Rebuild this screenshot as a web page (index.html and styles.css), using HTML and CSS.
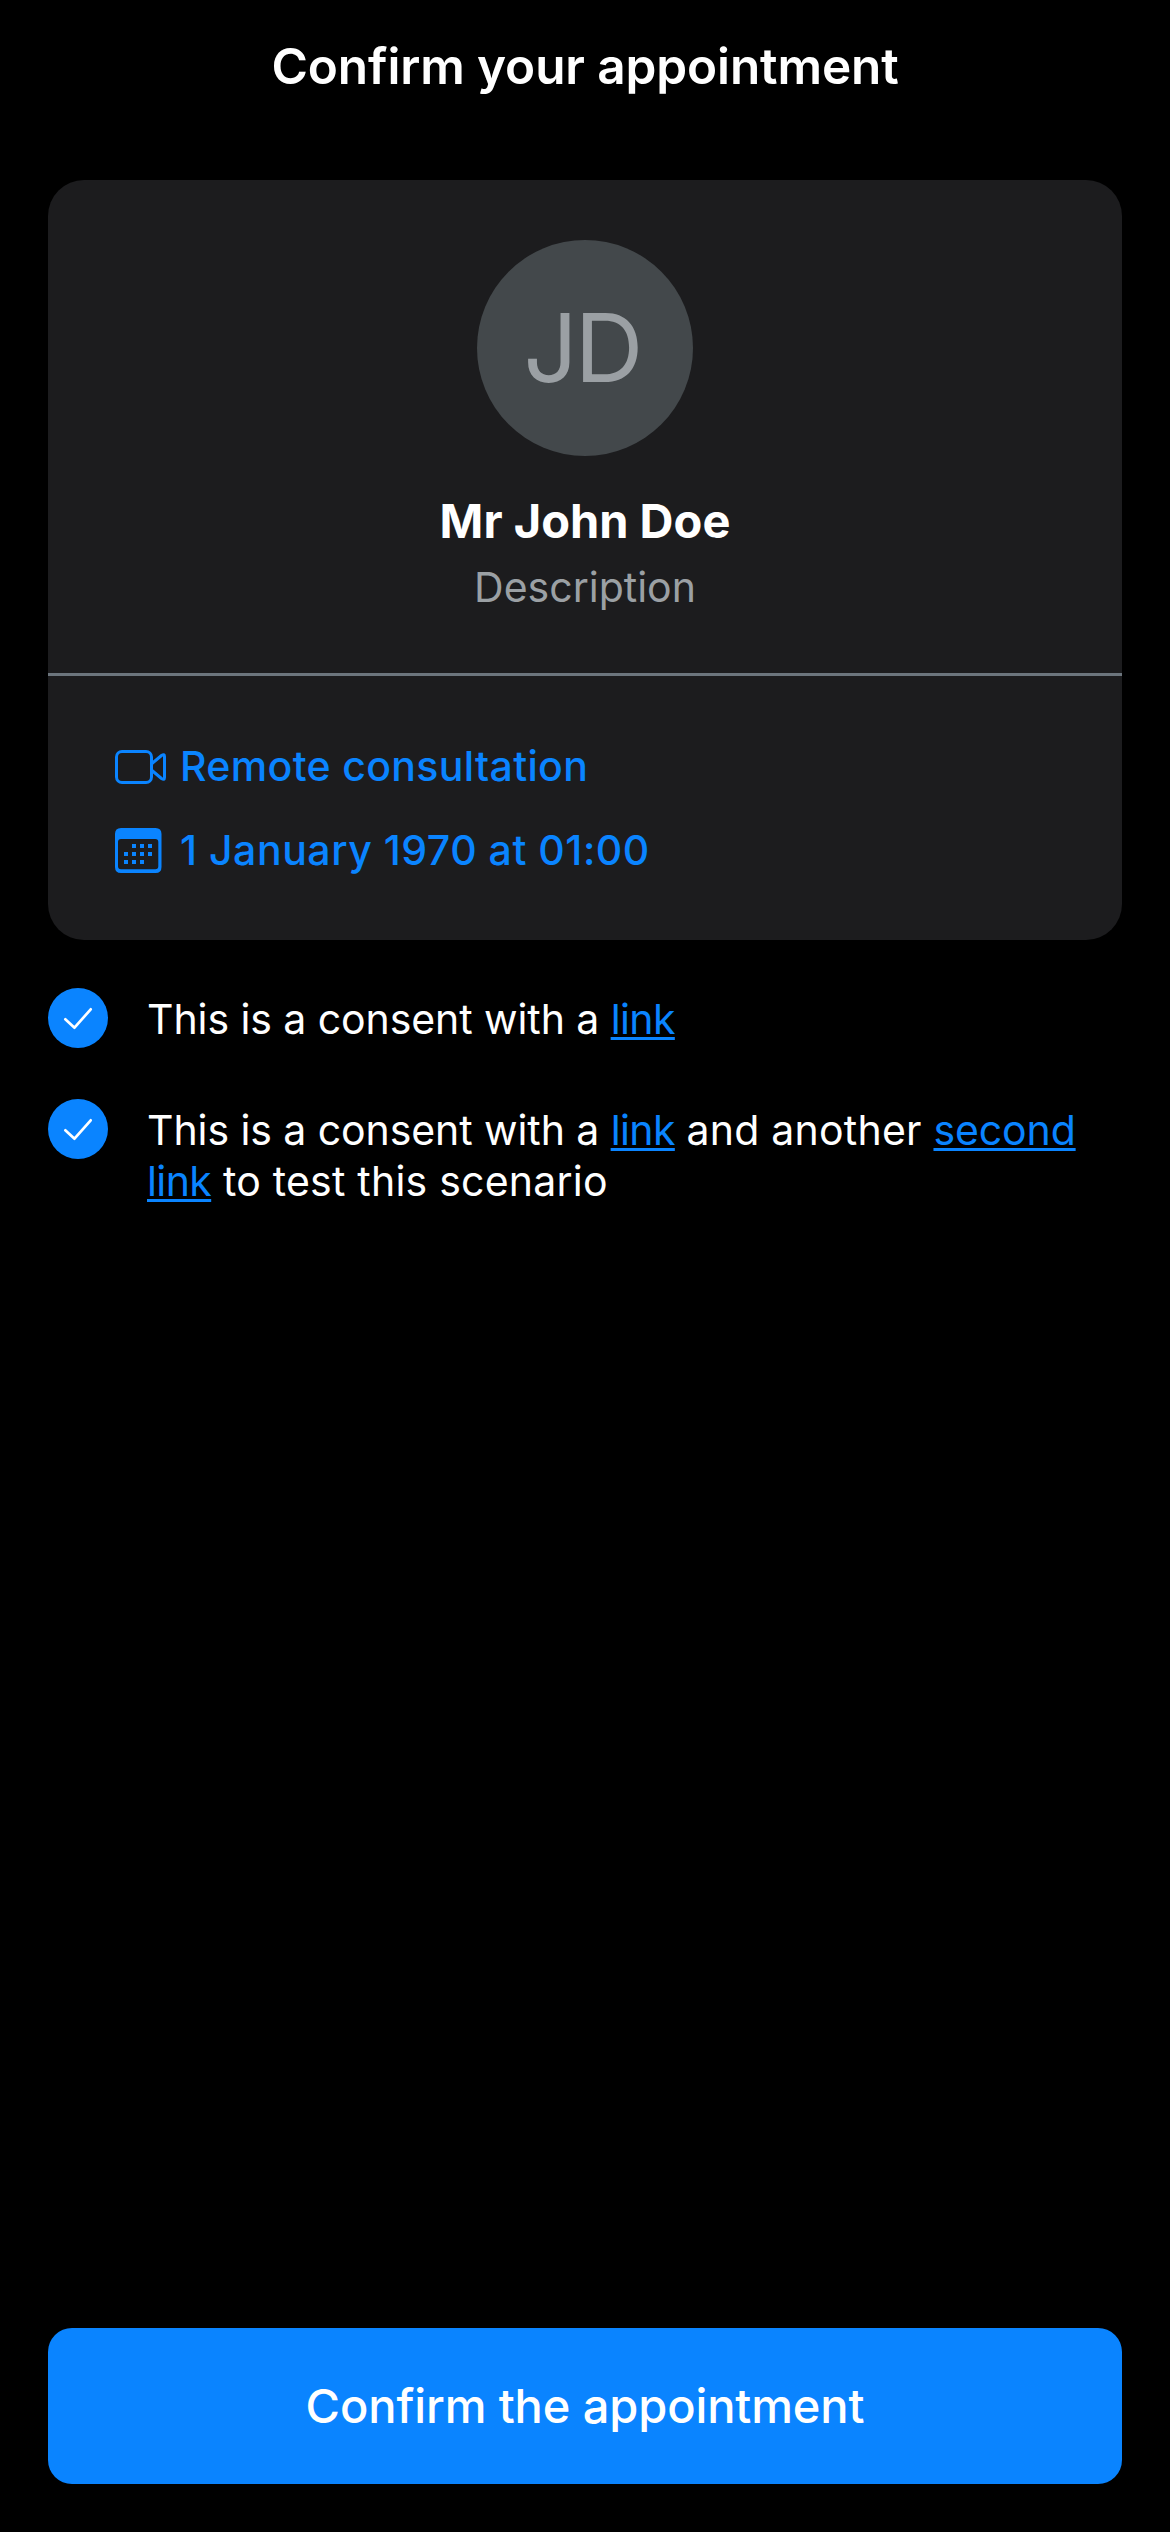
FILE: index.html
```html
<!DOCTYPE html>
<html lang="en">
<head>
<meta charset="utf-8">
<title>Confirm your appointment</title>
<link rel="stylesheet" href="styles.css">
</head>
<body>
<header class="header"><h1 class="title">Confirm your appointment</h1></header>
<main class="content">
  <section class="card">
    <div class="profile">
      <div class="avatar">JD</div>
      <h2 class="name">Mr John Doe</h2>
      <p class="description">Description</p>
    </div>
    <ul class="details">
      <li class="detail">
        <svg width="66" height="52" viewBox="0 0 66 52" fill="none" stroke="currentColor" stroke-width="3" stroke-linejoin="round"><rect x="2.5" y="11.5" width="35" height="31" rx="5.5"/><path d="M38 23.500 47.500 15.500Q50.500 13.500 50.500 16.500V37.500Q50.500 40.500 47.500 38.500L38 30.500"/></svg>
        <span>Remote consultation</span>
      </li>
      <li class="detail date">
        <svg width="66" height="52" viewBox="0 0 66 52" fill="currentColor"><path fill-rule="evenodd" d="M7 4H41.500Q47.500 4 47.500 10V43Q47.500 49 41.500 49H7Q1 49 1 43V10Q1 4 7 4ZM7 15Q4 15 4 18V42.200Q4 45.200 7 45.200H41.300Q44.300 45.200 44.300 42.200V18Q44.300 15 41.300 15Z"/><path d="M18 20h4v4h-4zM26 20h4v4h-4zM34 20h4v4h-4zM10 28h4v4h-4zM18 28h4v4h-4zM26 28h4v4h-4zM34 28h4v4h-4zM10 36h4v4h-4zM18 36h4v4h-4zM26 36h4v4h-4z"/></svg>
        <span>1 January 1970 at 01:00</span>
      </li>
    </ul>
  </section>
  <ul class="consents">
    <li class="consent">
      <span class="check"><svg width="60" height="60" viewBox="0 0 60 60" fill="none" stroke="currentColor" stroke-width="2.700" stroke-linecap="round" stroke-linejoin="round"><path d="M17.300 31.300 26.500 39.700 42.700 21.300"/></svg></span>
      <p class="consent-text">This is a consent with a <a class="link" href="#">link</a></p>
    </li>
    <li class="consent">
      <span class="check"><svg width="60" height="60" viewBox="0 0 60 60" fill="none" stroke="currentColor" stroke-width="2.700" stroke-linecap="round" stroke-linejoin="round"><path d="M17.300 31.300 26.500 39.700 42.700 21.300"/></svg></span>
      <p class="consent-text">This is a consent with a <a class="link" href="#">link</a><span class="loose"> and another </span><a class="link" href="#"><span class="word">second</span> link</a><span class="loose"> to test this scenario</span></p>
    </li>
  </ul>
</main>
<footer class="footer"><button class="confirm" type="button">Confirm the appointment</button></footer>
</body>
</html>
```
FILE: styles.css
```css
* {
  box-sizing: border-box;
  margin: 0;
  padding: 0;
}

body {
  display: flex;
  flex-direction: column;
  height: 2532px;
  background: #000;
  color: #fff;
  font-family: Inter, "Liberation Sans", sans-serif;
  font-size: 41px;
  line-height: 51px;
}

ul {
  list-style: none;
}

.title {
  font-size: 49.5px;
  font-weight: 600;
  letter-spacing: -0.12px;
  line-height: 132px;
  text-align: center;
}

.content {
  flex: 1;
  padding: 48px 48px 0;
}

.card {
  border-radius: 36px;
  background: #1c1c1e;
}

.profile {
  display: flex;
  flex-direction: column;
  align-items: center;
  padding: 60px 0;
  border-bottom: 3px solid #6c757d;
}

.avatar {
  display: flex;
  align-items: center;
  justify-content: center;
  width: 216px;
  height: 216px;
  padding: 0 6px 2px 0;
  border-radius: 50%;
  background: #43484b;
  color: #9ba0a4;
  font-size: 95px;
  letter-spacing: -3px;
}

.name {
  margin-top: 36px;
  font-size: 47px;
  font-weight: 700;
  line-height: 58px;
}

.description {
  margin-top: 11px;
  color: #9ba0a4;
  line-height: 52px;
}

.details {
  display: flex;
  flex-direction: column;
  gap: 32px;
  padding: 64px 66px;
}

.detail {
  display: flex;
  color: #0a84ff;
  font-weight: 500;
  letter-spacing: 0.34px;
  line-height: 52px;
}

.date {
  letter-spacing: 0.53px;
}

.consents {
  display: flex;
  flex-direction: column;
  gap: 51px;
  padding-top: 48px;
}

.consent {
  display: flex;
  gap: 39px;
}

.check {
  flex: none;
  width: 60px;
  height: 60px;
  border-radius: 50%;
  background: #0a84ff;
}

.consent-text {
  padding-top: 6px;
  letter-spacing: -0.08px;
}

.loose {
  letter-spacing: 0.22px;
}

.link {
  color: #0a84ff;
  letter-spacing: -0.6px;
  text-decoration: underline;
  text-decoration-thickness: 3px;
  text-decoration-skip-ink: none;
  text-underline-offset: 3px;
}

.word {
  letter-spacing: -0.12px;
}

.footer {
  padding: 0 48px 48px;
}

.confirm {
  display: block;
  width: 100%;
  height: 156px;
  padding-bottom: 1px;
  border: 0;
  border-radius: 24px;
  background: #0a84ff;
  color: #fff;
  font-family: inherit;
  font-size: 47px;
  font-weight: 500;
  letter-spacing: -0.11px;
}
```
